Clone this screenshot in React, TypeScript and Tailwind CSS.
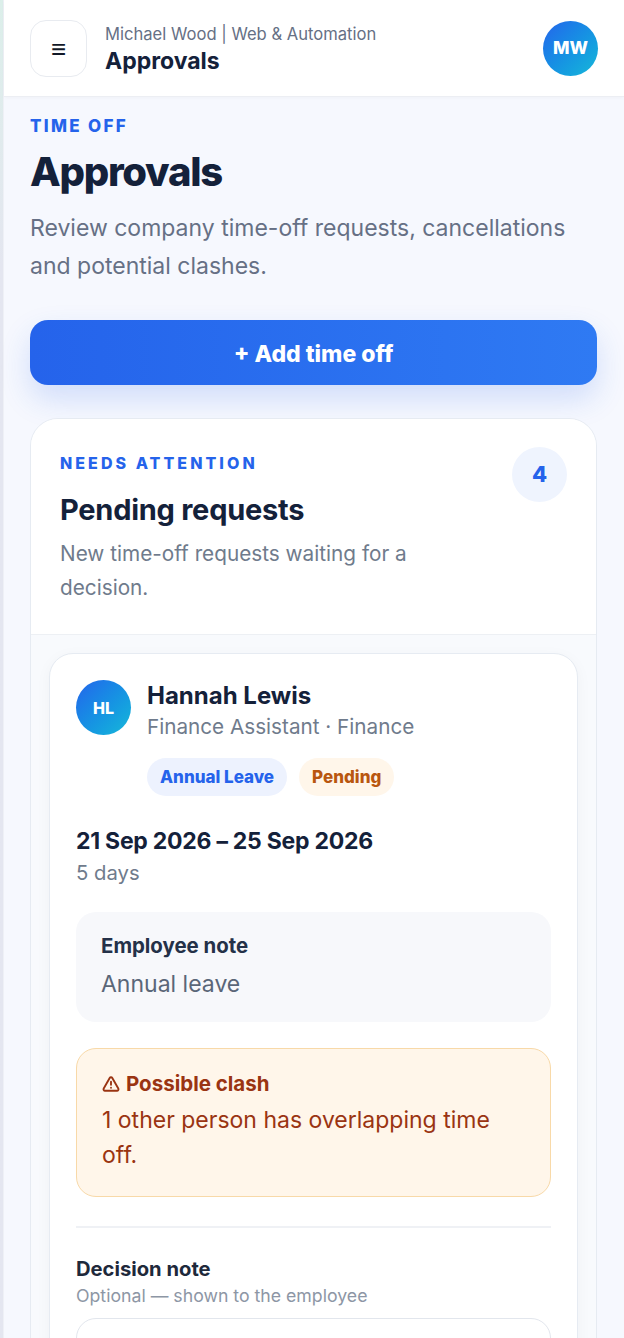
import { TriangleAlert } from 'lucide-react';

const font = { fontFamily: 'Inter, "Noto Sans", sans-serif' };

function Badge({ label, className }: { label: string; className: string }) {
  return (
    <span className={'flex h-[38px] items-center rounded-full px-[13px] pt-px text-[17px] font-extrabold ' + className}>
      {label}
    </span>
  );
}

function Avatar({ initials, className }: { initials: string; className: string }) {
  return (
    <div
      className={
        'flex shrink-0 items-center justify-center rounded-full bg-linear-to-br from-[#2563eb] to-[#1ab8d8] font-extrabold text-white ' +
        className
      }
    >
      {initials}
    </div>
  );
}

function RequestCard() {
  return (
    <div className="rounded-[24px] border border-[#e6ebf2] bg-white px-[26px] pt-[26px] pb-[40px] shadow-[0_4px_16px_rgba(15,23,42,0.04)]">
      <div className="flex gap-4">
        <Avatar initials="HL" className="h-[55px] w-[55px] text-[16px]" />
        <div className="mt-px">
          <div className="text-[24px] leading-[30px] font-bold text-[#14213a]">Hannah Lewis</div>
          <div className="mt-px text-[20.7px] leading-[30px] text-[#6f7b8c]">Finance Assistant · Finance</div>
          <div className="mt-[16px] flex gap-3">
            <Badge label="Annual Leave" className="bg-[#edf2fe] text-[#2563eb]" />
            <Badge label="Pending" className="bg-[#fff6ea] text-[#b9560f]" />
          </div>
        </div>
      </div>
      <div className="mt-[29px] text-[23px] leading-[32px] font-bold tracking-[-0.25px] text-[#14213a]">
        21 Sep 2026 – 25 Sep 2026
      </div>
      <div className="text-[20.3px] leading-[32px] text-[#6f7b8c]">5 days</div>
      <div className="mt-[23px] rounded-[20px] bg-[#f7f8fb] px-[25px] pt-[19px] pb-[21px]">
        <div className="text-[20.4px] leading-[30px] font-bold text-[#243148]">Employee note</div>
        <div className="mt-[6px] text-[23px] leading-[34px] text-[#5a6678]">Annual leave</div>
      </div>
      <div className="mt-[26px] rounded-[20px] border border-[#f8d9a8] bg-[#fff6ea] px-[25px] pt-[21px] pb-[23px]">
        <div className="flex items-center gap-[6px] text-[20.5px] leading-[28px] font-bold text-[#9a3412]">
          <TriangleAlert size={18} strokeWidth={2.5} />
          Possible clash
        </div>
        <div className="mt-[5px] text-[23px] leading-[35px] text-[#9a3412]">
          1 other person has overlapping time off.
        </div>
      </div>
      <div className="mt-[29px] border-t-2 border-[#eff1f5] pt-[27px]">
        <div className="text-[20.2px] leading-[28px] font-bold text-[#1e293b]">Decision note</div>
        <div className="-mt-px text-[17.7px] leading-[28px] text-[#8d96a5]">Optional — shown to the employee</div>
        <div className="mt-[8px] h-[120px] rounded-[20px] border border-[#e2e6ed] bg-white" />
      </div>
    </div>
  );
}

export default function App() {
  return (
    <div style={font} className="flex h-[1338px] w-[624px] overflow-hidden bg-[#f6f8fe]">
      <div className="w-[3px] shrink-0 bg-linear-to-b from-[#dcefea] to-[#e4e6f0] to-[20%]" />
      <div className="min-w-0 flex-1 border-l border-[#eef0f6]">
        <header className="flex h-[97px] items-center justify-between border-b border-[#eceef3] bg-white pr-[26px] pl-[26px] shadow-[0_1px_4px_rgba(15,23,42,0.03)]">
          <div className="flex items-center gap-[18px]">
            <button
              type="button"
              className="flex h-[57px] w-[57px] items-center justify-center rounded-[16px] border border-[#e8ebf0] bg-white text-[26px] font-bold text-[#111827]"
            >
              ≡
            </button>
            <div className="mt-px">
              <div className="text-[16.6px] leading-[24px] text-[#667085]">Michael Wood | Web &amp; Automation</div>
              <div className="text-[23px] leading-[30px] font-bold text-[#14213a]">Approvals</div>
            </div>
          </div>
          <Avatar initials="MW" className="h-[55px] w-[55px] text-[17.5px]" />
        </header>
        <main className="pr-[27px] pl-[26px]">
          <div className="mt-[19px] text-[17px] leading-[20px] font-extrabold tracking-[2.3px] text-[#2563eb]">TIME OFF</div>
          <h1 className="mt-[10px] text-[40px] leading-[52px] font-extrabold tracking-[-1.3px] text-[#14213a]">Approvals</h1>
          <p className="mt-[11px] text-[23px] leading-[38px] text-[#667085]">
            Review company time-off requests, cancellations and potential clashes.
          </p>
          <button
            type="button"
            className="mt-[35px] flex h-[65px] w-full items-center justify-center rounded-[18px] bg-linear-to-r from-[#2563eb] to-[#2f7af3] pt-[3px] text-[23px] font-extrabold text-white shadow-[0_14px_30px_rgba(37,99,235,0.18)]"
          >
            + Add time off
          </button>
          <section className="mt-[33px] overflow-hidden rounded-[28px] border border-[#e6ebf2] bg-[#f8fafd]">
            <div className="flex items-start justify-between border-b border-[#edf0f4] bg-white px-[29px] pt-[29px] pb-[29px]">
              <div className="w-[400px]">
                <div className="text-[16px] leading-[30px] font-extrabold tracking-[3.05px] text-[#2563eb]">NEEDS ATTENTION</div>
                <h2 className="mt-[14px] text-[29px] leading-[36px] font-bold tracking-[-0.25px] text-[#14213a]">Pending requests</h2>
                <p className="mt-[9px] text-[20.75px] leading-[34px] text-[#6f7b8c]">
                  New time-off requests waiting for a decision.
                </p>
              </div>
              <div className="-mt-px flex h-[55px] w-[55px] items-center justify-center rounded-full bg-[#eff4fe] text-[22px] font-extrabold text-[#2563eb]">
                4
              </div>
            </div>
            <div className="px-[18px] pt-[18px]">
              <RequestCard />
            </div>
          </section>
        </main>
      </div>
    </div>
  );
}
